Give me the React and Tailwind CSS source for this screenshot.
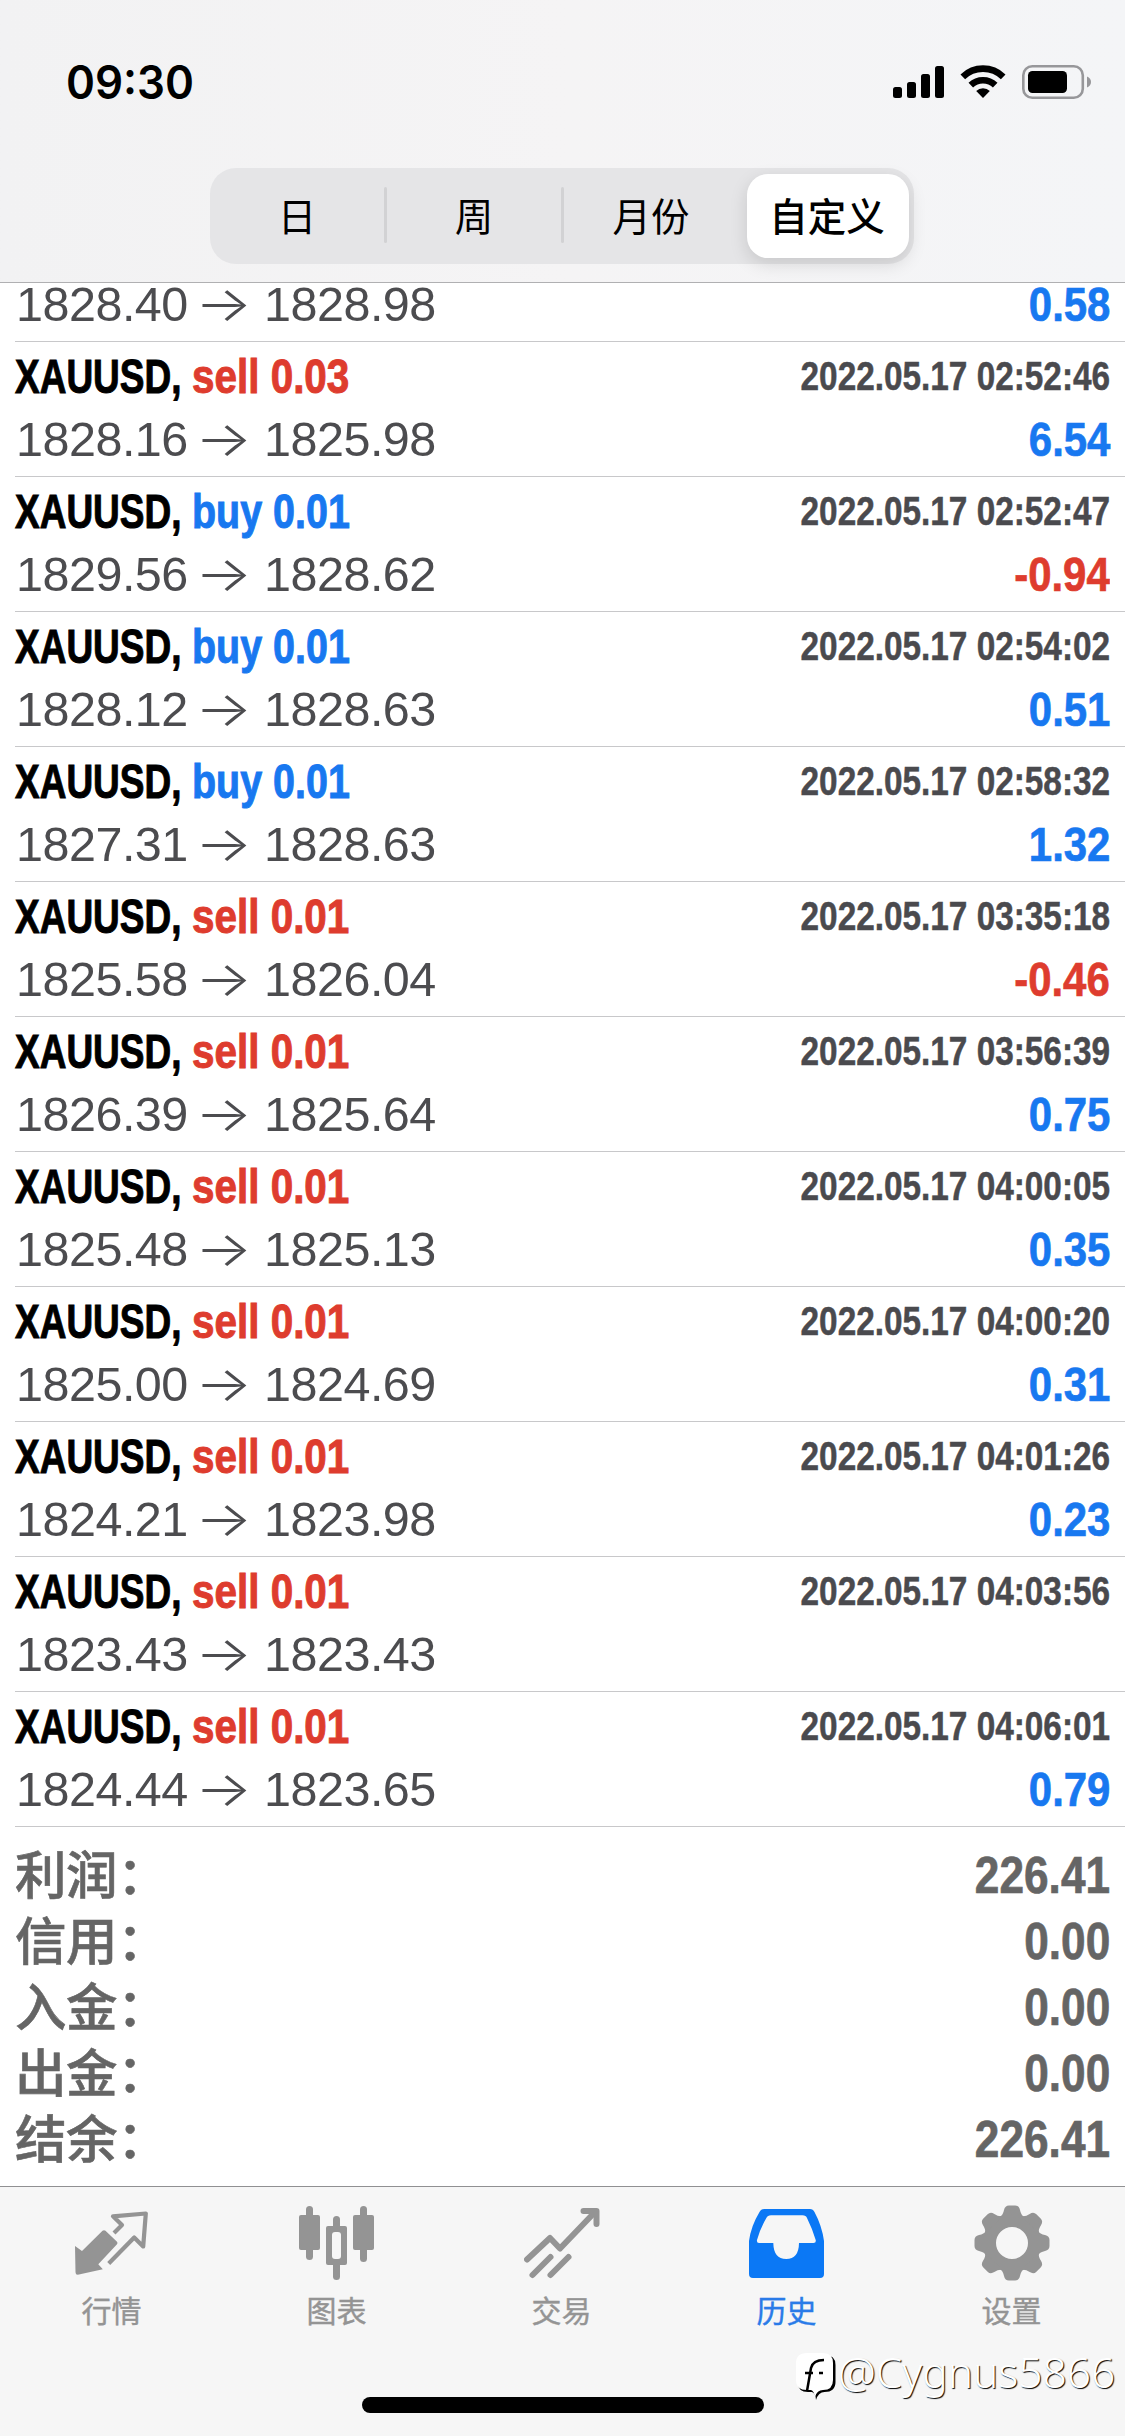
const TRADES = [
  ["sell 0.03", "1828.16", "1825.98", "2022.05.17 02:52:46", "6.54"],
  ["buy 0.01", "1829.56", "1828.62", "2022.05.17 02:52:47", "-0.94"],
  ["buy 0.01", "1828.12", "1828.63", "2022.05.17 02:54:02", "0.51"],
  ["buy 0.01", "1827.31", "1828.63", "2022.05.17 02:58:32", "1.32"],
  ["sell 0.01", "1825.58", "1826.04", "2022.05.17 03:35:18", "-0.46"],
  ["sell 0.01", "1826.39", "1825.64", "2022.05.17 03:56:39", "0.75"],
  ["sell 0.01", "1825.48", "1825.13", "2022.05.17 04:00:05", "0.35"],
  ["sell 0.01", "1825.00", "1824.69", "2022.05.17 04:00:20", "0.31"],
  ["sell 0.01", "1824.21", "1823.98", "2022.05.17 04:01:26", "0.23"],
  ["sell 0.01", "1823.43", "1823.43", "2022.05.17 04:03:56", ""],
  ["sell 0.01", "1824.44", "1823.65", "2022.05.17 04:06:01", "0.79"],
];

const SUMMARY = [
  ["利润：", "226.41"],
  ["信用：", "0.00"],
  ["入金：", "0.00"],
  ["出金：", "0.00"],
  ["结余：", "226.41"],
];

function StatusIcons() {
  return (
    <svg width="200" height="36" viewBox="893 64 200 36">
      <rect x="893" y="87" width="9" height="11" rx="2.5" />
      <rect x="907" y="82" width="9" height="16" rx="2.5" />
      <rect x="921" y="74" width="9" height="24" rx="2.5" />
      <rect x="935" y="66" width="9" height="32" rx="2.5" />
      <g fill="none" stroke="#000" strokeWidth="6.6">
        <path d="M962.8 76.8a29 29 0 0 1 40.4 0" />
        <path d="M970.8 85.2a17.6 17.6 0 0 1 24.4 0" />
      </g>
      <path d="M983 98l-6.8-7a9.6 9.6 0 0 1 13.6 0z" />
      <rect x="1023.3" y="66.2" width="59.5" height="31.6" rx="9" fill="none" stroke="#97979a" strokeWidth="2.6" />
      <rect x="1028" y="71" width="39" height="22" rx="4.5" />
      <path d="M1087 76.5q4 1.6 4 5.5t-4 5.5z" fill="#97979a" />
    </svg>
  );
}

function PriceLine({ from, to, profit }) {
  return (
    <div className="flex h-[54px] items-center justify-between leading-[54px]">
      <div className="flex items-center pl-[1px] text-[48.5px] tracking-[-0.5px] text-[#4c4c4f]">
        <span className="w-[179px] shrink-0">{from}</span>
        <span className="w-[69px] shrink-0">
          <span className="inline-block origin-left scale-x-[1.25] font-[Inter] text-[48px] font-light">→</span>
        </span>
        <span>{to}</span>
      </div>
      <span
        className={
          "origin-right scale-x-[0.855] text-[49px] font-bold [-webkit-text-stroke-width:0.7px] " +
          (profit.startsWith("-") ? "text-[#de3c2e]" : "text-[#1878f0]")
        }
      >
        {profit}
      </span>
    </div>
  );
}

function Trade({ trade }) {
  const [side, from, to, time, profit] = trade;
  return (
    <div className="ml-[15px] h-[135px] border-b border-[#c8c8ca] pt-[7px] pr-[15px] whitespace-nowrap">
      <div className="flex h-[54px] items-center justify-between leading-[54px] font-bold">
        <div className="flex text-[49px] [-webkit-text-stroke-width:1px]">
          <span className="w-[177px] shrink-0">
            <span className="inline-block origin-left scale-x-[0.755] text-black">XAUUSD,</span>
          </span>
          <span
            className={
              "origin-left " +
              (side.startsWith("sell") ? "scale-x-[0.825] text-[#de3c2e]" : "scale-x-[0.805] text-[#1878f0]")
            }
          >
            {side}
          </span>
        </div>
        <span className="origin-right scale-x-[0.823] text-[40.5px] text-[#4a4a4e] [-webkit-text-stroke-width:0.5px]">
          {time}
        </span>
      </div>
      <div className="pt-[9px]">
        <PriceLine from={from} to={to} profit={profit} />
      </div>
    </div>
  );
}

function QuotesIcon() {
  return (
    <svg width="75" height="76" viewBox="74 2205 75 76">
      <path
        d="M75 2246l7 5 20.5-20.2q1.5-1 3 0l11.500 11q1 1.200 0 2.500l-18.700 20 4.500 5-25 5.500q-2.300 0-2.300-2.500z"
        fill="#949494"
      />
      <path
        d="M114 2233l8-8-9-8.700 32.800-2.800-2.600 33-9-9-25.500 26"
        fill="none"
        stroke="#949494"
        strokeWidth="4.2"
        strokeLinejoin="round"
      />
    </svg>
  );
}

function ChartIcon() {
  return (
    <svg width="75" height="76" viewBox="299 2205 75 76" fill="#949494">
      <rect x="306" y="2206" width="7" height="54" rx="3.5" />
      <rect x="299" y="2215" width="21" height="35" rx="2" />
      <rect x="360" y="2206" width="7" height="56" rx="3.5" />
      <rect x="353" y="2215" width="21" height="35" rx="2" />
      <rect x="333" y="2216" width="7" height="64" rx="3.5" />
      <rect x="326" y="2226" width="21" height="39" rx="2" />
      <rect x="332" y="2232" width="9" height="27" rx="3" fill="#f6f6f6" />
    </svg>
  );
}

function TradeIcon() {
  return (
    <svg width="76" height="76" viewBox="524 2205 76 76" fill="none" stroke="#949494" strokeWidth="6" strokeLinecap="round">
      <path d="M527 2259.5L550 2238l10 10.500 34.500-36" strokeLinejoin="round" />
      <path d="M583.5 2211h13v13" strokeLinejoin="round" />
      <path d="M532.5 2275l18-18M550.5 2275l18-18" />
    </svg>
  );
}

function HistoryIcon() {
  return (
    <svg width="75" height="76" viewBox="749 2205 75 76">
      <path
        fillRule="evenodd"
        fill="#0b78f5"
        d="M764 2209h46q3 0 4.500 3Q822 2226 824 2241v33q0 4-4 4h-67q-4 0-4-4v-33Q751 2226 759.500 2212q1.500-3 4.500-3zM771 2215.300q-3.500 0-4.500 2.500Q760 2229 757 2240q-.5 3 2 3h14.300q.3 16 12.900 16T799 2243h14.500q2.800 0 2.200-3Q812 2228 807 2218q-1-2.700-4.500-2.700z"
      />
    </svg>
  );
}

function GearIcon() {
  return (
    <svg width="76" height="76" viewBox="-38 -38 76 76" fill="#949494">
      <circle r="22.5" fill="none" stroke="#949494" strokeWidth="13" />
      {[0, 45, 90, 135, 180, 225, 270, 315].map((a) => (
        <path key={a} transform={`rotate(${a})`} d="M-12-26q3-2 4-7 1-4.500 5-4.500h6q4 0 5 4.500 1 5 4 7z" />
      ))}
    </svg>
  );
}

const TABS = [
  ["行情", QuotesIcon],
  ["图表", ChartIcon],
  ["交易", TradeIcon],
  ["历史", HistoryIcon],
  ["设置", GearIcon],
];

function Segment({ label, divider }) {
  return (
    <div className="relative flex h-full w-[177px] items-center justify-center pr-[3px] pb-[3px]">
      {label}
      {divider && <span className="absolute right-0 h-[56px] w-[3px] rounded-full bg-[#d2d2d4]" />}
    </div>
  );
}

export default function App() {
  return (
    <div className="relative flex h-[2436px] w-[1125px] flex-col overflow-hidden bg-white font-['Liberation_Sans','Noto_Sans_CJK_SC',sans-serif]">
      <header className="h-[283px] shrink-0 border-b border-[#b0b0b2] bg-linear-to-r from-[#f2f2f3] via-[#f5f4f5] to-[#f4f5f7]">
        <div className="flex h-[168px] items-start justify-between pt-[64px] pr-[32px] pl-[66px]">
          <span className="origin-left scale-x-[0.955] font-[Inter] text-[46px] leading-[37px] font-semibold">09:30</span>
          <StatusIcons />
        </div>
        <div className="ml-[210px] flex h-[96px] w-[704px] items-center rounded-[26px] bg-[#e5e5e7] font-['Noto_Sans_CJK_SC',sans-serif] text-[38.5px] leading-none text-black">
          <Segment label="日" divider />
          <Segment label="周" divider />
          <Segment label="月份" />
          <div className="ml-[6px] flex h-[84px] w-[162px] items-center justify-center rounded-[21px] bg-white pr-[2px] pb-[3px] font-medium shadow-[0_6px_18px_rgba(0,0,0,0.13)]">
            自定义
          </div>
        </div>
      </header>

      <main className="h-[1903px] shrink-0 overflow-hidden">
        <div className="ml-[15px] flex h-[59px] flex-col border-b border-[#c8c8ca] pr-[15px] whitespace-nowrap">
          <div className="-mt-[6px]">
            <PriceLine from="1828.40" to="1828.98" profit="0.58" />
          </div>
        </div>
        {TRADES.map((t) => (
          <Trade key={t[3]} trade={t} />
        ))}
        <div className="pt-[15px] pr-[15px] pl-[15px]">
          {SUMMARY.map(([label, value]) => (
            <div key={label} className="flex h-[66px] items-center justify-between leading-[66px] text-[#656565]">
              <span className="pb-[7px] font-['Noto_Sans_CJK_SC',sans-serif] text-[51.5px] font-medium tracking-[-0.4px] [-webkit-text-stroke-width:0.6px]">
                {label}
              </span>
              <span className="origin-right scale-x-[0.85] text-[52px] font-bold [-webkit-text-stroke-width:0.7px]">{value}</span>
            </div>
          ))}
        </div>
      </main>

      <footer className="relative flex-1 border-t border-[#909092] bg-[#f6f6f6]">
        <div className="-ml-[1px] grid w-[1125px] grid-cols-5 pt-[18px]">
          {TABS.map(([label, Icon]) => (
            <div
              key={label}
              className={
                "flex flex-col items-center font-['Noto_Sans_CJK_SC',sans-serif] text-[30px] leading-[36px] [-webkit-text-stroke-width:0.4px] " +
                (label === "历史" ? "text-[#2a7be8]" : "text-[#949494]")
              }
            >
              <Icon />
              <span className="mt-[10px]">{label}</span>
            </div>
          ))}
        </div>
        <div className="absolute top-[210px] left-[362px] h-[16px] w-[402px] rounded-full bg-black" />
        <div className="absolute top-[165px] left-[796px] flex items-start">
          <svg width="44" height="52" viewBox="0 0 44 52">
            <path d="M12 3h17q10.500 0 10.500 10v17q0 10-11 10-6 0-8.500 8-.5-7-4-8h-4q-10 0-10-9V13Q2 3 12 3z" fill="#000" />
            <path d="M11 1h16q10 0 10 10v17q0 10-10 10-6 0-8 7-1-6-4-7h-4Q0 38 0 28V11Q0 1 11 1z" fill="#fff" />
            <path d="M11 39l4-23q2-8 13-8M9 21h8M23 21h4" fill="none" stroke="#000" strokeWidth="2.5" />
          </svg>
          <span className="-mt-[4px] -ml-[2px] font-['Noto_Sans'] text-[42.5px] leading-[48px] font-light text-white [text-shadow:1px_1px_1px_#000]">
            @Cygnus5866
          </span>
        </div>
      </footer>
    </div>
  );
}
